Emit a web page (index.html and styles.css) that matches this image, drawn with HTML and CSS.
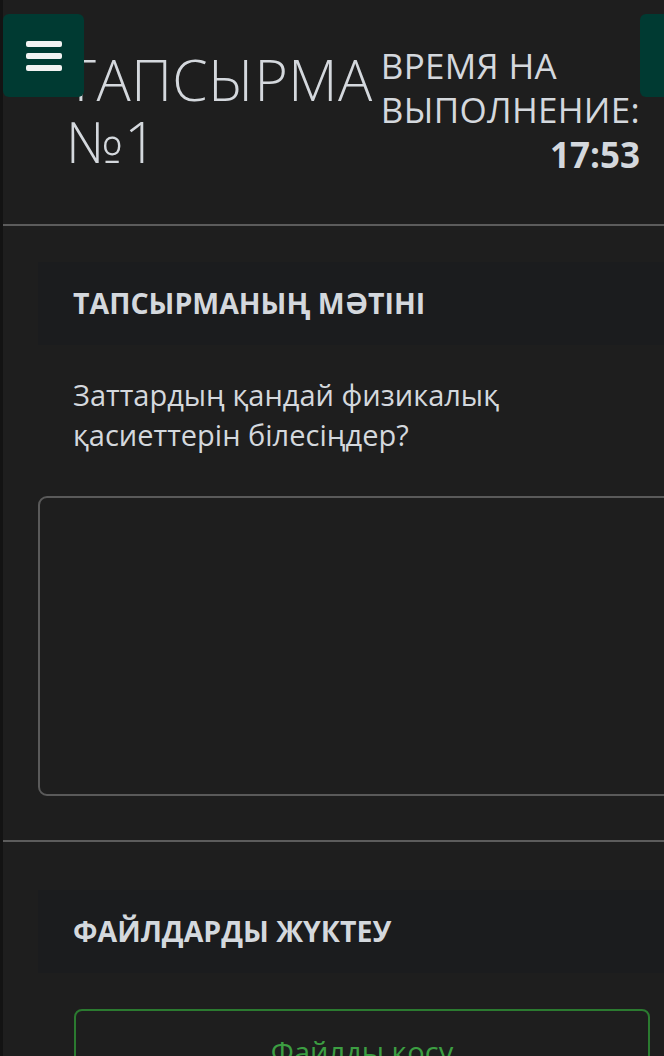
FILE: index.html
```html
<!DOCTYPE html>
<html lang="kk">
<head>
    <meta charset="UTF-8">
    <meta name="viewport" content="width=device-width, initial-scale=1.0">
    <title>Тапсырма №1</title>
    <link rel="stylesheet" href="styles.css">
</head>
<body>
    <button class="menuBtn" type="button" aria-label="Меню">
        <svg width="38" height="32" viewBox="0 0 38 32">
            <rect x="1" y="1" width="36" height="6" rx="2" fill="#f2f2f2"/>
            <rect x="1" y="13" width="36" height="6" rx="2" fill="#f2f2f2"/>
            <rect x="1" y="25" width="36" height="6" rx="2" fill="#f2f2f2"/>
        </svg>
    </button>
    <button class="sideBtn" type="button" aria-label="Меню"></button>

    <div class="header">
        <h1 class="title">ТАПСЫРМА<br>№1</h1>
        <div class="timer">
            <div class="timerLabel">ВРЕМЯ НА<br>ВЫПОЛНЕНИЕ:</div>
            <div class="timerValue">17:53</div>
        </div>
    </div>

    <div class="section">
        <div class="cardHead">ТАПСЫРМАНЫҢ МӘТІНІ</div>
        <p class="question">Заттардың қандай физикалық<br>қасиеттерін білесіңдер?</p>
        <textarea class="answer"></textarea>
    </div>

    <div class="section">
        <div class="cardHead">ФАЙЛДАРДЫ ЖҮКТЕУ</div>
        <button class="fileBtn" type="button">Файлды қосу</button>
    </div>
</body>
</html>
```

FILE: styles.css
```css
body {
    margin: 0;
    padding: 0;
    background-color: #1e1e1e;
    color: #d4d8dd;
    font-family: "Open Sans", "Noto Sans", sans-serif;
    border-left: 3px solid #131313;
    height: 1056px;
    overflow: hidden;
}
.menuBtn {
    position: fixed;
    left: 3px;
    top: 14px;
    width: 81px;
    height: 83px;
    border: none;
    border-radius: 6px;
    background-color: #003a32;
    display: flex;
    align-items: center;
    justify-content: center;
    padding: 0;
}
.sideBtn {
    position: fixed;
    left: 640px;
    top: 14px;
    width: 60px;
    height: 83px;
    border: none;
    border-radius: 6px;
    background-color: #003a32;
}
.header {
    display: flex;
    justify-content: space-between;
    padding: 48px 24px 0 63px;
    border-bottom: 2px solid #5c5c5c;
    box-sizing: border-box;
    height: 226px;
}
.title {
    margin: 0;
    font-size: 57px;
    font-weight: 300;
    line-height: 62px;
    letter-spacing: 0.5px;
    color: #d4d8dd;
}
.timer {
    text-align: right;
}
.timerLabel {
    text-align: left;
    font-size: 35px;
    font-weight: 400;
    line-height: 44px;
    letter-spacing: 0.3px;
    margin-top: -4px;
}
.timerValue {
    margin-top: 1px;
    font-size: 35px;
    font-weight: 700;
    line-height: 44px;
}
.section {
    padding: 36px 0 44px 35px;
}
.section + .section {
    padding-top: 48px;
    border-top: 2px solid #5c5c5c;
}
.cardHead {
    background-color: #1b1c1e;
    height: 83px;
    line-height: 83px;
    padding-left: 35px;
    font-size: 28.5px;
    font-weight: 700;
    color: #d4d8dd;
}
.question {
    margin: 30px 0 0 35px;
    font-size: 29px;
    line-height: 40px;
}
.answer {
    display: block;
    margin-top: 41px;
    width: 660px;
    height: 300px;
    background-color: transparent;
    border: 2px solid #5a5a5a;
    border-radius: 9px;
    box-sizing: border-box;
}
.fileBtn {
    display: block;
    margin: 36px 0 0 36px;
    width: 576px;
    height: 84px;
    background-color: transparent;
    border: 2px solid #2b7a30;
    border-radius: 8px;
    color: #3c9e42;
    font-family: "Open Sans", "Noto Sans", sans-serif;
    font-size: 29px;
    padding: 0;
}
```
